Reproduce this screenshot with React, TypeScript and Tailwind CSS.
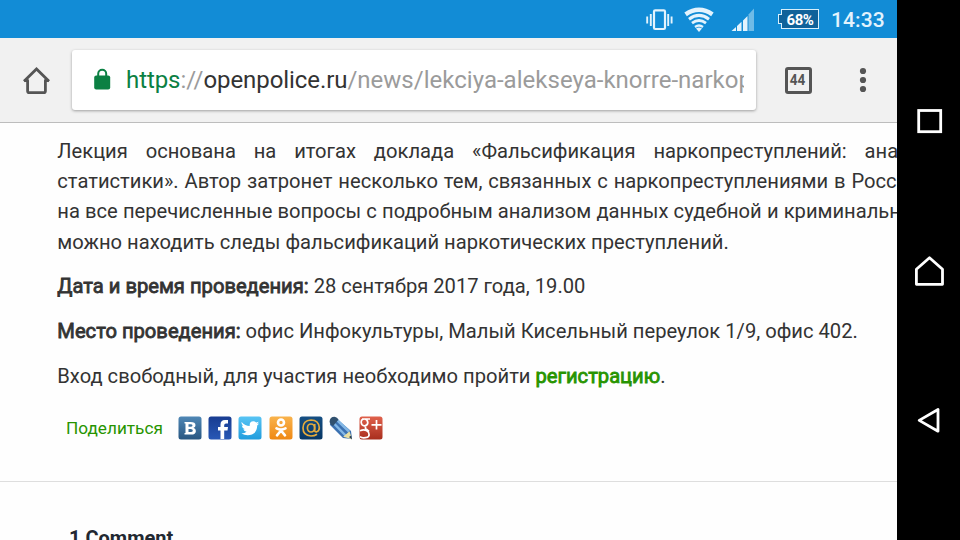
import type { ReactNode } from 'react';

function StatusBar() {
  return (
    <header className="flex h-[38px] shrink-0 items-center bg-[#128cd6] pl-[645px] text-[#e3f3fd]">
      <svg className="h-[38px] w-[28px]" viewBox="0 0 28 38" fill="none" stroke="currentColor">
        <rect x="9" y="10.300" width="11" height="18.700" rx="1.2" strokeWidth="2.2" />
        <path d="M5.8 14v12M23.2 14v12" strokeWidth="1.9" />
        <path d="M2.2 16.500v7M26.6 16.500v7" strokeWidth="1.9" />
      </svg>
      <svg className="ml-[11px] h-[38px] w-[30px]" viewBox="0 0 30 38" fill="none" stroke="currentColor">
        <path d="M1.6 14.400Q15 5.200 28.4 14.400" strokeWidth="4.4" />
        <path d="M5 19.200Q15 11.600 25 19.200" strokeWidth="3" />
        <path d="M8 23.200Q15 17.800 22 23.200" strokeWidth="2.8" />
        <path d="M11 27Q15 24 19 27" strokeWidth="2.2" />
        <path d="M12 28.600Q15 26.600 18 28.600L15 32Z" fill="currentColor" stroke="none" />
      </svg>
      <svg className="ml-[17px] h-[38px] w-[24px]" viewBox="0 0 24 38" fill="currentColor">
        <path d="M.5 31 5 27v4ZM6 31v-5l4.500-4.200V31ZM12 31V20.500l4.500-4.500V31Z" />
        <path d="M17.500 31V14.500L23 8.500V31Z" opacity=".45" />
      </svg>
      <div className="relative ml-[26px] flex h-[20px] w-[38px] items-center justify-center border border-[#d8effb] bg-[#0f629a] text-[15px] font-bold tracking-[-0.5px] text-white">
        <span className="absolute -left-[4px] top-[4px] h-[10px] w-[4px] border-y border-l border-[#d8effb] bg-[#0f629a]" />
        <span className="pt-[2px]">68%</span>
      </div>
      <time className="ml-[12px] pt-px text-[21px] font-medium leading-[38px] tracking-[0.1px]">14:33</time>
    </header>
  );
}

function BrowserToolbar() {
  return (
    <nav className="flex h-[85px] shrink-0 items-start border-b border-[#bdbdbd] bg-[#f1f1f1] pl-[22px] pt-[12px] text-[#555]">
      <svg className="mt-[16px] h-[30px] w-[29px] shrink-0" viewBox="0 0 29 30" fill="none" stroke="currentColor" strokeWidth="2.800" strokeLinejoin="round">
        <path d="M2 15.300 14.500 3l12.500 12.300" strokeLinejoin="miter" />
        <path d="M2.300 14.500H5.600V25Q5.600 26.700 7.300 26.700H21.700Q23.400 26.700 23.400 25V14.500H26.700" />
      </svg>
      <div className="ml-[21px] flex h-[60px] w-[684px] shrink-0 items-center rounded-[3px] bg-white pl-[22px] shadow-[0_1px_3px_rgba(0,0,0,0.35)]">
        <svg className="h-[24px] w-[17px] shrink-0" viewBox="0 0 17 24">
          <path d="M4.200 9V5.700a4 4 0 0 1 8 0V9" fill="none" stroke="#0b8043" strokeWidth="2" />
          <rect x=".2" y="7.500" width="16" height="14" rx="2" fill="#0b8043" />
        </svg>
        <p className="ml-[15px] w-[618px] overflow-hidden whitespace-nowrap text-[24px] leading-[60px] tracking-[0.02px] text-[#9b9b9b]">
          <span className="tracking-[-0.080px] text-[#0b8043]">https</span>://<span className="tracking-[-0.080px] text-[#333]">openpolice.ru</span>/news/lekciya-alekseya-knorre-narkop
        </p>
      </div>
      <div className="ml-[29px] mt-[17px] flex size-[27px] shrink-0 items-center justify-center rounded-[3px] border-[3px] border-[#555] text-[15px] font-bold">
        <span className="-ml-px scale-x-90">44</span>
      </div>
      <svg className="ml-[46px] mt-[16px] h-[30px] w-[10px]" viewBox="0 0 10 30" fill="currentColor">
        <circle cx="5" cy="5" r="3.1" />
        <circle cx="5" cy="14" r="3.1" />
        <circle cx="5" cy="23" r="3.1" />
      </svg>
    </nav>
  );
}

function Strong({ children }: { children: ReactNode }) {
  return <span className="[-webkit-text-stroke:0.8px_currentColor]">{children}</span>;
}

function ShareIcons() {
  return (
    <div className="ml-[15px] flex gap-[6.200px]">
      <svg className="size-6" viewBox="0 0 24 24">
        <defs>
          <linearGradient id="vk" x2="0" y2="1"><stop stopColor="#4f87b5" /><stop offset="1" stopColor="#285681" /></linearGradient>
          <linearGradient id="fb" x2="0" y2="1"><stop stopColor="#183c91" /><stop offset="1" stopColor="#2858b5" /></linearGradient>
          <linearGradient id="tw" x2="0" y2="1"><stop stopColor="#58c4f4" /><stop offset="1" stopColor="#219ddd" /></linearGradient>
          <linearGradient id="ok" x2="0" y2="1"><stop stopColor="#f9b34c" /><stop offset="1" stopColor="#ef8813" /></linearGradient>
          <linearGradient id="mail" x2="0" y2="1"><stop stopColor="#164f83" /><stop offset="1" stopColor="#073664" /></linearGradient>
          <linearGradient id="gp" x2="0" y2="1"><stop stopColor="#e0614c" /><stop offset="1" stopColor="#a82e1d" /></linearGradient>
        </defs>
        <rect x=".5" y=".5" width="23" height="23" rx="2.5" fill="url(#vk)" />
        <path fillRule="evenodd" fill="#fff" d="M6.500 6h6q5 0 5 3.200 0 2-2 2.600 2.400.7 2.400 3.100 0 3.600-5 3.600H6.500V17h1V7.500h-1ZM10.500 8.300v2.500h2q2 0 2-1.300t-2-1.200ZM10.500 13v3h2.300q2 0 2-1.500T12.800 13Z" />
      </svg>
      <svg className="size-6" viewBox="0 0 24 24">
        <rect x=".5" y=".5" width="23" height="23" rx="2.5" fill="url(#fb)" />
        <path d="M12.500 23v-8.500H10V11h2.500V8.500Q12.500 4 17 4h3v3.500h-2q-1.800 0-1.800 1.700V11H20l-.5 3.500h-3.300V23Z" fill="#fff" />
      </svg>
      <svg className="size-6" viewBox="0 0 24 24">
        <rect x=".5" y=".5" width="23" height="23" rx="2.5" fill="url(#tw)" />
        <path d="M3.600 6Q7 10 11.700 10 11.300 5.500 15.300 5.300q1.700 0 2.900 1.200l2.500-.8-1.500 2.200 2-.5-2 2.200Q19 16.500 14 18.500 8.500 20.400 3.400 17.500q3.300 0 5.200-1.700-2.500-.3-3.300-2.600h1.600Q4 12 3.800 9.500l1.500.4Q3 8 3.600 6Z" fill="#fff" />
      </svg>
      <svg className="size-6" viewBox="0 0 24 24">
        <rect x=".5" y=".5" width="23" height="23" rx="2.5" fill="url(#ok)" />
        <g fill="none" stroke="#fff" strokeWidth="2.600" strokeLinecap="round">
          <circle cx="12" cy="6.500" r="3" />
          <path d="M7.500 12.300q4.500 2.500 9 0M12 14.500l-4 4.800M12 14.500l4 4.800" />
        </g>
      </svg>
      <svg className="size-6" viewBox="0 0 24 24">
        <rect x=".5" y=".5" width="23" height="23" rx="2.5" fill="url(#mail)" />
        <g fill="none" stroke="#e5aa3c" strokeWidth="1.700">
          <ellipse cx="12" cy="12" rx="3.600" ry="4" />
          <path d="M15.700 8v6.200q0 2 2 1.600 2.600-.8 2.600-4Q19.800 4 12 4q-8 .5-8 8 0 7.500 8 8 3.500 0 6-1.800" />
        </g>
      </svg>
      <svg className="size-6" viewBox="0 0 24 24">
        <path d="M6 1.200 22 15l1 8-9-1L.8 8.800Z" fill="#3b71b1" />
        <path d="m7.500 3.500 12.500 12M4.500 7 17 20" stroke="#83b7e5" strokeWidth="2.500" />
        <path d="M5.500.8q3 .3 4 3L4 10Q.7 8.500.6 5.500.8 1 5.500.8Z" fill="#31516f" />
        <path d="m14.200 20.700 6.300-5.500 2.500 8Z" fill="#e8dfa1" />
        <path d="m20 21 3 2.500-.8-4Z" fill="#263c54" />
      </svg>
      <svg className="size-6" viewBox="0 0 24 24">
        <rect x=".5" y=".5" width="23" height="23" rx="2.5" fill="url(#gp)" />
        <g fill="none" stroke="#fff" strokeWidth="1.700">
          <path d="M3 3h8M5.500 3Q2 3 2.200 6.500q.5 3.500 3.500 3.300Q9 9.500 8.800 6.300 8.300 3 5.500 3M6.500 10v2.500l3.500 3M1 14.700q5.500-2 8.500 1.500 2 5-3 5.500-4 .5-5.500-1M17.500 4v9.500M12.500 8.800h10" />
        </g>
      </svg>
    </div>
  );
}

function Article() {
  return (
    <main className="h-[417px] overflow-hidden whitespace-nowrap bg-[#fefefe] text-[20.160px] leading-[30px] text-[#333]">
      <div className="pl-[57.300px] pt-[13px]">
        <p className="[word-spacing:12.850px]">Лекция основана на итогах доклада «Фальсификация наркопреступлений: анализ</p>
        <p className="[word-spacing:0.850px]">статистики». Автор затронет несколько тем, связанных с наркопреступлениями в России</p>
        <p className="[word-spacing:0.150px]">на все перечисленные вопросы с подробным анализом данных судебной и криминальной</p>
        <p className="mt-px">можно находить следы фальсификаций наркотических преступлений.</p>
        <p className="mt-[14px]"><Strong>Дата и время проведения:</Strong> 28 сентября 2017 года, 19.00</p>
        <p className="mt-[15px]"><Strong>Место проведения:</Strong> офис Инфокультуры, Малый Кисельный переулок 1/9, офис 402.</p>
        <p className="mt-[15px]">Вход свободный, для участия необходимо пройти <a className="text-[#279400]"><Strong>регистрацию</Strong></a>.</p>
      </div>
      <section className="ml-[66px] mt-[25px] flex h-6 items-center">
        <span className="w-[97px] text-[17.200px] text-[#279400]">Поделиться</span>
        <ShareIcons />
      </section>
      <hr className="mt-[41px] border-t border-[#dedede]" />
      <h2 className="ml-[69px] mt-[41px] text-[20px] font-bold text-[#222831]">1 Comment</h2>
    </main>
  );
}

function NavigationRail() {
  return (
    <aside className="flex w-[63px] shrink-0 flex-col items-center bg-black pt-[106px]">
      <svg className="h-[30px] w-[32px]" viewBox="0 0 32 30" fill="none" stroke="#fff" strokeWidth="2.800">
        <rect x="5.700" y="4.500" width="22" height="21.200" />
      </svg>
      <svg className="mt-[118px] h-[36px] w-[32px]" viewBox="0 0 32 36" fill="none" stroke="#fff" strokeWidth="2.800" strokeLinejoin="round">
        <path d="M3.400 15.300 16.500 3.800l13 11.500v15H3.400Z" />
      </svg>
      <svg className="mt-[115px] h-[32px] w-[32px]" viewBox="0 0 32 32" fill="none" stroke="#fff" strokeWidth="2.800" strokeLinejoin="round">
        <path d="M25 4.500v21.700L6.200 15.400Z" />
      </svg>
    </aside>
  );
}

export default function App() {
  return (
    <div className="flex h-[540px] w-[960px] overflow-hidden bg-black font-['Roboto',sans-serif]">
      <div className="flex w-[897px] shrink-0 flex-col overflow-hidden">
        <StatusBar />
        <BrowserToolbar />
        <Article />
      </div>
      <NavigationRail />
    </div>
  );
}
